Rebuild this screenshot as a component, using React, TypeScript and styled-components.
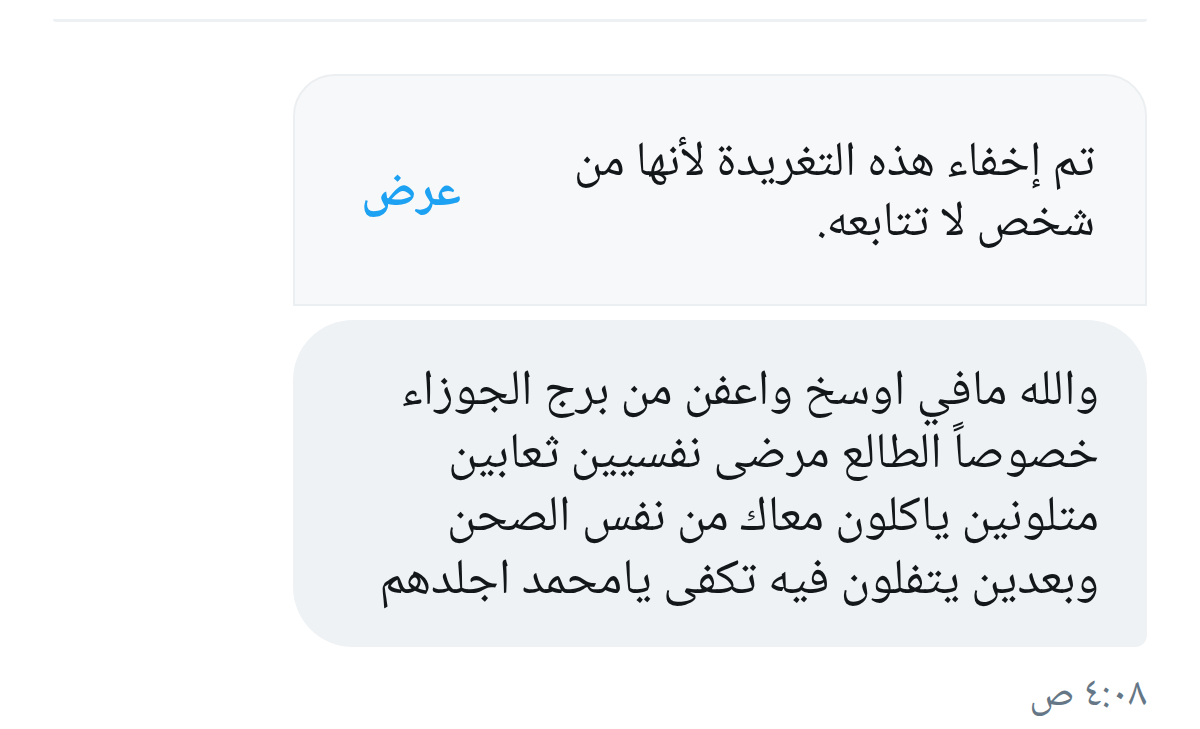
import React from 'react';
import styled, { createGlobalStyle } from 'styled-components';

const GlobalStyle = createGlobalStyle`
  html, body {
    margin: 0;
    padding: 0;
    background: #ffffff;
  }
  body {
    font-family: "Noto Naskh Arabic", "Noto Sans Arabic", "DejaVu Sans", sans-serif;
  }
`;

const App: React.FC = () => {
  return (
    <>
      <GlobalStyle />
      <Page dir="rtl">
        <TopRule />
        <Thread>
          <HiddenCard>
            <HiddenText>
              تم إخفاء هذه التغريدة لأنها من
              <br />
              شخص لا تتابعه.
            </HiddenText>
            <ShowLink>عرض</ShowLink>
          </HiddenCard>
          <Bubble>
            <BubbleText>
              والله مافي اوسخ واعفن من برج الجوزاء
              <br />
              خصوصاً الطالع مرضى نفسيين ثعابين
              <br />
              متلونين ياكلون معاك من نفس الصحن
              <br />
              وبعدين يتفلون فيه تكفى يامحمد اجلدهم
            </BubbleText>
          </Bubble>
          <Time>٤:٠٨ ص</Time>
        </Thread>
      </Page>
    </>
  );
};

const Page = styled.div`
  width: 1200px;
  box-sizing: border-box;
  padding: 19px 53px 0;
`;

const TopRule = styled.div`
  height: 3px;
  background: #eef1f3;
  border-radius: 0 0 3px 3px;
`;

const Thread = styled.div`
  display: flex;
  flex-direction: column;
  align-items: flex-start;
  padding-top: 52px;
`;

const HiddenCard = styled.div`
  width: 854px;
  height: 232px;
  box-sizing: border-box;
  display: flex;
  align-items: center;
  justify-content: space-between;
  padding: 10px 50px 0 66px;
  background: #f7f8f9;
  border: 2px solid #eceff1;
  border-radius: 42px 42px 0 0;
`;

const HiddenText = styled.div`
  font-size: 49px;
  line-height: 60px;
  color: #14171a;
`;

const ShowLink = styled.div`
  font-size: 49px;
  line-height: 60px;
  font-weight: bold;
  color: #1da1f2;
`;

const Bubble = styled.div`
  margin-top: 14px;
  width: 854px;
  height: 327px;
  box-sizing: border-box;
  padding: 42px 48px 0 30px;
  background: #eff2f4;
  border-radius: 60px 60px 12px 60px;
`;

const BubbleText = styled.div`
  font-size: 50px;
  line-height: 63px;
  color: #14171a;
  white-space: nowrap;
`;

const Time = styled.div`
  margin-top: 27px;
  font-size: 41px;
  line-height: 44px;
  color: #657786;
`;

export default App;
